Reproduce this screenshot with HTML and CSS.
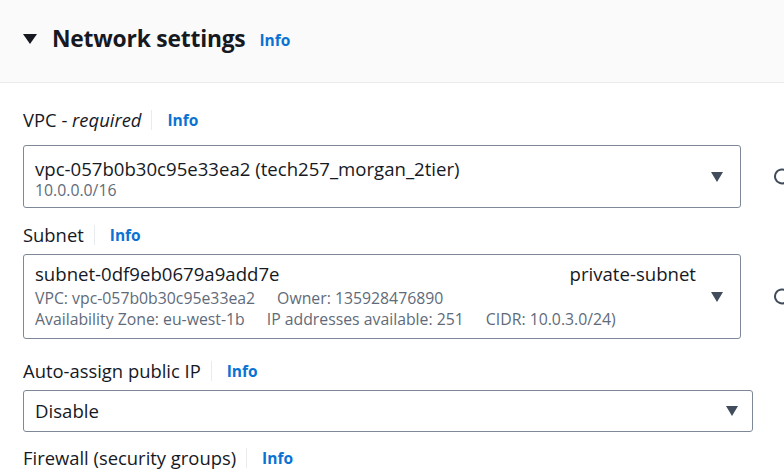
FILE: index.html
```html
<!DOCTYPE html>
<html>
<head>
<meta charset="utf-8">
<link rel="stylesheet" href="styles.css">
</head>
<body>
<div class="panel">
  <div class="header">
    <span class="toggle"></span>
    <h2 class="title">Network settings</h2>
    <a class="info info-head">Info</a>
  </div>
  <div class="content">
    <div class="field field-vpc">
      <div class="label-row">
        <span class="label">VPC - <i>required</i></span>
        <span class="sep"></span>
        <a class="info">Info</a>
      </div>
      <div class="control-row">
        <div class="select select-vpc">
          <div class="sel-text">
            <div class="main">vpc-057b0b30c95e33ea2 (tech257_morgan_2tier)</div>
            <div class="sub">10.0.0.0/16</div>
          </div>
          <span class="caret"></span>
        </div>
        <div class="refresh"><svg width="20" height="20" viewBox="0 0 20 20"><path d="M15 4.5 A7 7 0 1 0 17 10" fill="none" stroke="#414d5c" stroke-width="2"/></svg></div>
      </div>
    </div>

    <div class="field field-subnet">
      <div class="label-row">
        <span class="label">Subnet</span>
        <span class="sep"></span>
        <a class="info">Info</a>
      </div>
      <div class="control-row">
        <div class="select select-subnet">
          <div class="sel-text">
            <div class="main-row"><span class="main">subnet-0df9eb0679a9add7e</span><span class="main tag">private-subnet</span></div>
            <div class="sub"><span class="gap">VPC: vpc-057b0b30c95e33ea2</span><span>Owner: 135928476890</span></div>
            <div class="sub"><span class="gap">Availability Zone: eu-west-1b</span><span class="gap">IP addresses available: 251</span><span>CIDR: 10.0.3.0/24)</span></div>
          </div>
          <span class="caret"></span>
        </div>
        <div class="refresh"><svg width="20" height="20" viewBox="0 0 20 20"><path d="M15 4.5 A7 7 0 1 0 17 10" fill="none" stroke="#414d5c" stroke-width="2"/></svg></div>
      </div>
    </div>

    <div class="field field-auto">
      <div class="label-row">
        <span class="label">Auto-assign public IP</span>
        <span class="sep"></span>
        <a class="info">Info</a>
      </div>
      <div class="control-row">
        <div class="select select-disable">
          <div class="sel-text"><div class="main">Disable</div></div>
          <span class="caret"></span>
        </div>
      </div>
    </div>

    <div class="field field-fw">
      <div class="label-row">
        <span class="label">Firewall (security groups)</span>
        <span class="sep"></span>
        <a class="info">Info</a>
      </div>
    </div>
  </div>
</div>
</body>
</html>
```
FILE: styles.css
```css
* { box-sizing: border-box; }
html, body { margin: 0; padding: 0; background: #fff; }
body {
  font-family: "Open Sans", "Noto Sans", sans-serif;
  color: #16191f;
  width: 784px;
  height: 474px;
  overflow: hidden;
}
.panel { width: 784px; overflow: hidden; }
.header {
  height: 83px;
  background: #fafafa;
  border-bottom: 1px solid #e9ebed;
  display: flex;
  align-items: center;
  padding: 0 0 5px 23px;
}
.toggle {
  width: 0; height: 0;
  border-left: 7px solid transparent;
  border-right: 7px solid transparent;
  border-top: 10px solid #16191f;
  margin-right: 15px;
}
.title {
  margin: 0;
  font-size: 22.8px;
  font-weight: 700;
  letter-spacing: -0.2px;
  line-height: 28px;
}
.info {
  color: #0972d3;
  font-weight: 700;
  font-size: 15.5px;
  text-decoration: none;
}
.info-head { margin-left: 14px; margin-top: 3px; }
.content { padding: 0 0 0 23px; }
.label-row {
  display: flex;
  align-items: center;
  height: 24px;
}
.label { font-size: 18.4px; line-height: 24px; }
.sep {
  width: 1px;
  height: 20px;
  background: #e9ebed;
  margin: 0 15px 0 10px;
}
.control-row { display: flex; align-items: center; }
.select {
  flex-shrink: 0;
  border: 1px solid #7d8998;
  border-radius: 3px;
  display: flex;
  align-items: center;
  padding: 0 17px 0 11px;
  background: #fff;
}
.select-vpc, .select-subnet { width: 718px; }
.select-disable { width: 730px; height: 42px; padding-right: 14px; }
.select-vpc { height: 63px; }
.select-vpc .sel-text { padding-top: 4px; }
.select-subnet { height: 85px; }
.sel-text { flex: 1; }
.main { font-size: 18.6px; line-height: 22px; }
.main-row { display: flex; justify-content: space-between; padding-right: 15px; margin-bottom: 3px; }
.sub { font-size: 15.8px; line-height: 21px; color: #5f6b7a; white-space: nowrap; }
.select-vpc .sub { line-height: 20px; }
.gap { margin-right: 22px; }
.caret {
  flex-shrink: 0;
  width: 0; height: 0;
  border-left: 6.5px solid transparent;
  border-right: 6.5px solid transparent;
  border-top: 10px solid #414d5c;
}
.refresh { flex-shrink: 0; margin-left: 31px; display: flex; align-items: center; }
.field-vpc { padding-top: 25px; }
.field-vpc .control-row { margin-top: 13px; }
.field-subnet { padding-top: 15px; }
.field-subnet .control-row { margin-top: 7px; }
.field-auto { padding-top: 20px; }
.field-auto .control-row { margin-top: 7px; }
.field-fw { padding-top: 14px; }
```
